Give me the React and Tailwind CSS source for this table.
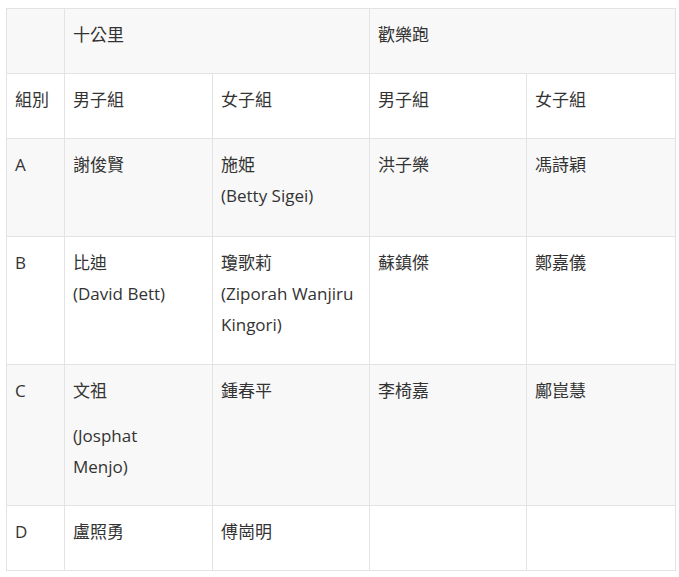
const rows = [
    { group: "A", cells: [["謝俊賢"], ["施姫", "(Betty Sigei)"], ["洪子樂"], ["馮詩穎"]], h: "h-[98px]" },
    { group: "B", cells: [["比迪", "(David Bett)"], ["瓊歌莉", "(Ziporah Wanjiru", "Kingori)"], ["蘇鎮傑"], ["鄭嘉儀"]], h: "h-[128px]" },
    { group: "C", cells: [["文祖"], ["鍾春平"], ["李椅嘉"], ["鄺崑慧"]], h: "h-[141px]", split: true },
    { group: "D", cells: [["盧照勇"], ["傅崗明"], [], []], h: "h-[65px]" },
];

const cell = "border border-[#e3e3e3] align-top pl-[8px] pr-[9px] pt-[10px] pb-0";

function Lines({ lines }) {
    return lines.map((l, i) => (
        <span key={i}>
            {i > 0 && <br />}
            {l}
        </span>
    ));
}

export default function App() {
    return (
        <div
            className="bg-white w-[679px] h-[577px] pt-[8px] pl-[6px] text-[#333] text-[17px] leading-[31px]"
            style={{ fontFamily: '"Open Sans", "Noto Sans CJK TC", sans-serif' }}
        >
            <table className="table-fixed border-collapse w-[669px]">
                <colgroup>
                    <col className="w-[58px]" />
                    <col className="w-[148px]" />
                    <col className="w-[157px]" />
                    <col className="w-[157px]" />
                    <col className="w-[149px]" />
                </colgroup>
                <tbody>
                    <tr className="bg-[#f8f8f8] h-[65px]">
                        <td className={cell}></td>
                        <td className={cell} colSpan={2}>十公里</td>
                        <td className={cell} colSpan={2}>歡樂跑</td>
                    </tr>
                    <tr className="bg-white h-[65px]">
                        <td className={cell}>組別</td>
                        <td className={cell}>男子組</td>
                        <td className={cell}>女子組</td>
                        <td className={cell}>男子組</td>
                        <td className={cell}>女子組</td>
                    </tr>
                    {rows.map((r, i) => (
                        <tr key={r.group} className={`${r.h} ${i % 2 === 0 ? "bg-[#f8f8f8]" : "bg-white"}`}>
                            <td className={cell}>{r.group}</td>
                            {r.cells.map((c, j) => (
                                <td key={j} className={cell}>
                                    {r.split && j === 0 ? (
                                        <>
                                            <p className="mb-[14px]">文祖</p>
                                            <p>(Josphat<br />Menjo)</p>
                                        </>
                                    ) : (
                                        <Lines lines={c} />
                                    )}
                                </td>
                            ))}
                        </tr>
                    ))}
                </tbody>
            </table>
        </div>
    );
}
